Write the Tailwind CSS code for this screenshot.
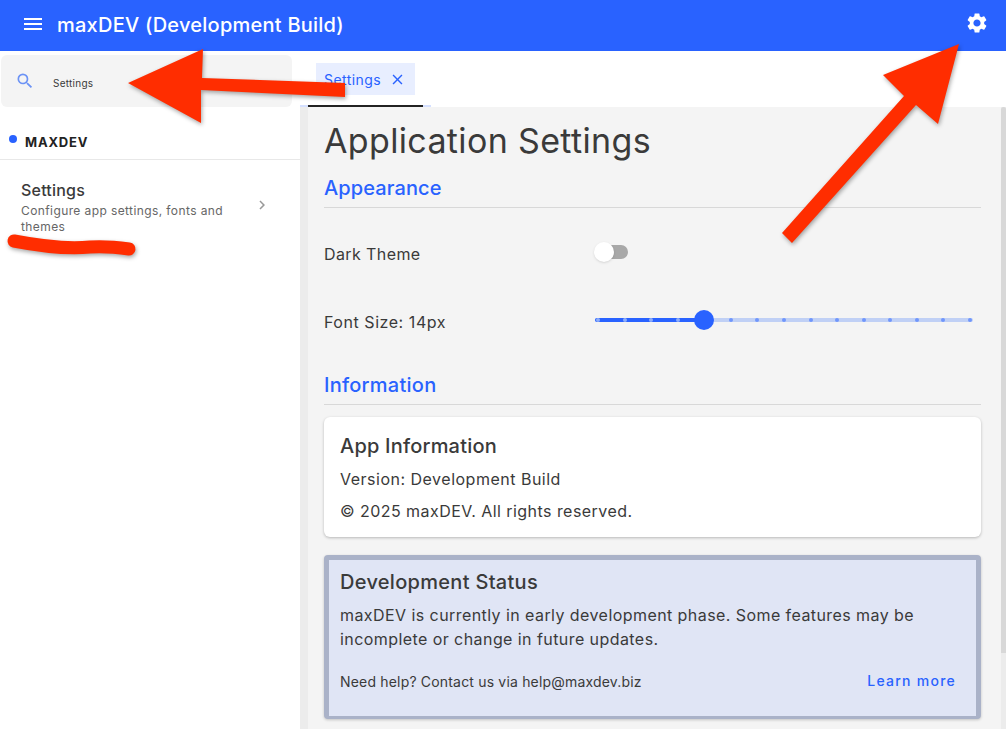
<!DOCTYPE html>
<html lang="en">
<head>
  <meta charset="UTF-8" />
  <title>maxDEV (Development Build)</title>
  <script src="https://cdn.jsdelivr.net/npm/@tailwindcss/browser@4"></script>
</head>
<body class="relative h-[729px] w-[1006px] overflow-hidden bg-white font-['Inter',sans-serif] text-[#3a3a3a]">

  <!-- top bar -->
  <header class="flex h-[51px] items-center justify-between bg-[#2962ff] pb-[3px] pl-[21px] pr-[17px] text-white">
    <div class="flex items-center gap-[12px]">
      <svg class="h-6 w-6" viewBox="0 0 24 24" fill="#fff"><path d="M3 18h18v-2H3v2zm0-5h18v-2H3v2zm0-7v2h18V6H3z"/></svg>
      <span class="mt-[1px] text-[20px] font-medium tracking-[0.24px]">maxDEV (Development Build)</span>
    </div>
    <svg class="-mt-[2px] h-6 w-6" viewBox="0 0 24 24" fill="#fff"><path d="M19.14 12.94c.04-.3.06-.61.06-.94 0-.32-.02-.64-.07-.94l2.03-1.58a.49.49 0 0 0 .12-.61l-1.92-3.32a.488.488 0 0 0-.59-.22l-2.39.96c-.5-.38-1.03-.7-1.62-.94l-.36-2.54a.484.484 0 0 0-.48-.41h-3.84c-.24 0-.43.17-.47.41l-.36 2.54c-.59.24-1.13.57-1.62.94l-2.39-.96c-.22-.08-.47 0-.59.22L2.74 8.87c-.12.21-.08.47.12.61l2.03 1.58c-.05.3-.09.63-.09.94s.02.64.07.94l-2.03 1.58a.49.49 0 0 0-.12.61l1.92 3.32c.12.22.37.29.59.22l2.39-.96c.5.38 1.03.7 1.62.94l.36 2.54c.05.24.24.41.48.41h3.84c.24 0 .44-.17.47-.41l.36-2.54c.59-.24 1.13-.56 1.62-.94l2.39.96c.22.08.47 0 .59-.22l1.92-3.32c.12-.22.07-.47-.12-.61l-2.01-1.58zM12 15.6c-1.98 0-3.6-1.62-3.6-3.6s1.62-3.6 3.6-3.6 3.6 1.62 3.6 3.6-1.62 3.6-3.6 3.6z"/></svg>
  </header>

  <div class="flex h-[678px]">
    <!-- sidebar -->
    <aside class="w-[300px] shrink-0 bg-white">
      <div class="ml-px mr-[8px] mt-1 flex h-[52px] items-center rounded-md bg-[#f4f4f4] pl-[14px]">
        <svg class="h-5 w-5" viewBox="0 0 24 24" fill="#6c93f5"><path d="M15.5 14h-.79l-.28-.27A6.47 6.47 0 0 0 16 9.5 6.5 6.5 0 1 0 9.5 16c1.61 0 3.09-.59 4.23-1.57l.27.28v.79l5 4.99L20.49 19l-4.99-5zm-6 0C7.01 14 5 11.99 5 9.5S7.01 5 9.5 5 14 7.01 14 9.5 11.99 14 9.5 14z"/></svg>
        <span class="ml-[18px] mt-1 text-[10px] tracking-[0.25px]">Settings</span>
      </div>
      <div class="flex h-[53px] items-center border-b border-[#e8e8e8] pl-[9px] pt-[19px]">
        <span class="mb-2 h-2 w-2 rounded-full bg-[#2962ff]"></span>
        <span class="ml-2 text-[13px] font-bold tracking-[0.8px] text-[#222]">MAXDEV</span>
      </div>
      <div class="flex pl-[21px] pr-[29px] pt-[20px]">
        <div class="w-[220px]">
          <div class="text-[16px] font-medium leading-[20px] tracking-[0.2px]">Settings</div>
          <div class="mt-[3px] text-[12px] leading-[16px] tracking-[0.4px] text-[#666]">Configure app settings, fonts and themes</div>
        </div>
        <svg class="ml-auto mt-[16px] h-[18px] w-[18px]" viewBox="0 0 24 24" fill="#999"><path d="M10 6 8.59 7.41 13.17 12l-4.58 4.59L10 18l6-6z"/></svg>
      </div>
    </aside>

    <div class="flex min-w-0 flex-1 flex-col">
      <!-- tab bar -->
      <div class="h-[56px] shrink-0 bg-white">
        <div class="ml-[16px] mt-[12px] flex h-[32px] w-[99px] items-center justify-between bg-[#e8eeff] pl-2 pr-[9px] text-[14px] tracking-[0.45px] text-[#2962ff]">
          <span>Settings</span>
          <svg class="h-[17px] w-[17px]" viewBox="0 0 24 24" fill="#2962ff"><path d="M19 6.41 17.59 5 12 10.59 6.41 5 5 6.41 10.59 12 5 17.59 6.41 19 12 13.41 17.59 19 19 17.59 13.41 12z"/></svg>
        </div>
        <div class="relative mt-[10px] h-[2px] w-[131px] bg-[#d5e0ff]">
          <div class="ml-[8px] h-[2px] w-[115px] bg-[#222]"></div>
        </div>
      </div>

      <!-- settings content -->
      <div class="flex h-[622px] bg-[#ececec] pl-[8px]">
        <main class="min-w-0 flex-1 overflow-hidden bg-[#f4f4f4] pl-[16px] pr-[20px]">
          <h1 class="mt-[13px] text-[34px] leading-[42px] tracking-[0.35px] text-[#3a3a3a]">Application Settings</h1>
          <h2 class="mt-[13px] border-b border-[#d8d8d8] pb-[6px] text-[20px] font-medium leading-[26px] tracking-[0.1px] text-[#2962ff]">Appearance</h2>

          <div class="mt-[34px] flex h-[24px] items-center">
            <span class="w-[271px] text-[16px] tracking-[0.4px]">Dark Theme</span>
            <div class="relative -mt-1 h-[14px] w-[33px] rounded-full bg-[#a8a8a8]">
              <div class="absolute -left-[1px] -top-[3px] h-5 w-5 rounded-full bg-white shadow-sm"></div>
            </div>
          </div>

          <div class="mt-[44px] flex h-[24px] items-center">
            <span class="w-[271px] text-[16px] tracking-[0.55px]">Font Size: 14px</span>
            <div class="relative -mt-1 h-1 w-[378px] rounded-full bg-[#c0d0f5]">
              <div class="h-1 w-[109px] rounded-l-full bg-[#2962ff]"></div>
              <div class="absolute inset-x-0 top-0 flex h-1 items-center justify-between pl-[1px] pr-[1px]">
                <span class="h-1 w-1 rounded-full bg-[#8eadfa]"></span>
                <span class="h-1 w-1 rounded-full bg-[#8eadfa]"></span>
                <span class="h-1 w-1 rounded-full bg-[#8eadfa]"></span>
                <span class="h-1 w-1 rounded-full bg-[#8eadfa]"></span>
                <span class="h-1 w-1 rounded-full bg-[#2962ff]"></span>
                <span class="h-1 w-1 rounded-full bg-[#7096fb]"></span>
                <span class="h-1 w-1 rounded-full bg-[#7096fb]"></span>
                <span class="h-1 w-1 rounded-full bg-[#7096fb]"></span>
                <span class="h-1 w-1 rounded-full bg-[#7096fb]"></span>
                <span class="h-1 w-1 rounded-full bg-[#7096fb]"></span>
                <span class="h-1 w-1 rounded-full bg-[#7096fb]"></span>
                <span class="h-1 w-1 rounded-full bg-[#7096fb]"></span>
                <span class="h-1 w-1 rounded-full bg-[#7096fb]"></span>
                <span class="h-1 w-1 rounded-full bg-[#7096fb]"></span>
                <span class="h-1 w-1 rounded-full bg-[#7096fb]"></span>
              </div>
              <div class="absolute left-[99px] -top-2 h-5 w-5 rounded-full bg-[#2962ff]"></div>
            </div>
          </div>

          <h2 class="mt-[38px] border-b border-[#d8d8d8] pb-[6px] text-[20px] font-medium leading-[26px] tracking-[0.25px] text-[#2962ff]">Information</h2>

          <section class="mt-[12px] h-[120px] rounded-md bg-white px-4 pt-[17px] shadow-[0_1px_3px_rgba(0,0,0,0.25)]">
            <h3 class="text-[20px] font-medium leading-[24px] tracking-[0.2px]">App Information</h3>
            <p class="mt-[11px] text-[16px] leading-[20px] tracking-[0.5px]">Version: Development Build</p>
            <p class="mt-[12px] text-[16px] leading-[20px] tracking-[0.45px]">© 2025 maxDEV. All rights reserved.</p>
          </section>

          <section class="mt-[18px] h-[164px] rounded-sm border-x-[5px] border-t-[5px] border-b-[3px] border-[#aab2c8] bg-[#e0e5f5] pl-[11px] pr-[20px] pt-[10px] shadow-[0_1px_3px_rgba(0,0,0,0.2)]">
            <h3 class="text-[20px] font-medium leading-[24px] tracking-[0.3px]">Development Status</h3>
            <p class="mt-[9px] text-[16px] leading-[24px] tracking-[0.43px]">maxDEV is currently in early development phase. Some features may be incomplete or change in future updates.</p>
            <div class="mt-[19px] flex items-center justify-between">
              <span class="text-[14px] tracking-[0.18px]">Need help? Contact us via help@maxdev.biz</span>
              <span class="mb-[2px] text-[14px] font-medium tracking-[1.25px] text-[#2962ff]">Learn more</span>
            </div>
          </section>
        </main>
        <div class="h-[546px] w-[5px] shrink-0 rounded-t bg-[#d8d8d8]"></div>
      </div>
    </div>
  </div>

  <!-- red annotations drawn on top of the screenshot -->
  <svg class="pointer-events-none absolute left-0 top-0 drop-shadow-[1px_2px_2px_rgba(0,0,0,0.35)]" width="1006" height="729" viewBox="0 0 1006 729">
    <polygon fill="#ff2d00" points="128,83 203,49 202,78 345,83 345,97 201,90 201,123"/>
    <polygon fill="#ff2d00" points="959,44 883,75 904,96 782,233 792,243 916,105 938,124"/>
    <path fill="none" stroke="#ff2d00" stroke-width="13" stroke-linecap="round" d="M14 241 C 40 246, 70 249, 90 247 C 105 246, 115 247, 129 249"/>
  </svg>
</body>
</html>
